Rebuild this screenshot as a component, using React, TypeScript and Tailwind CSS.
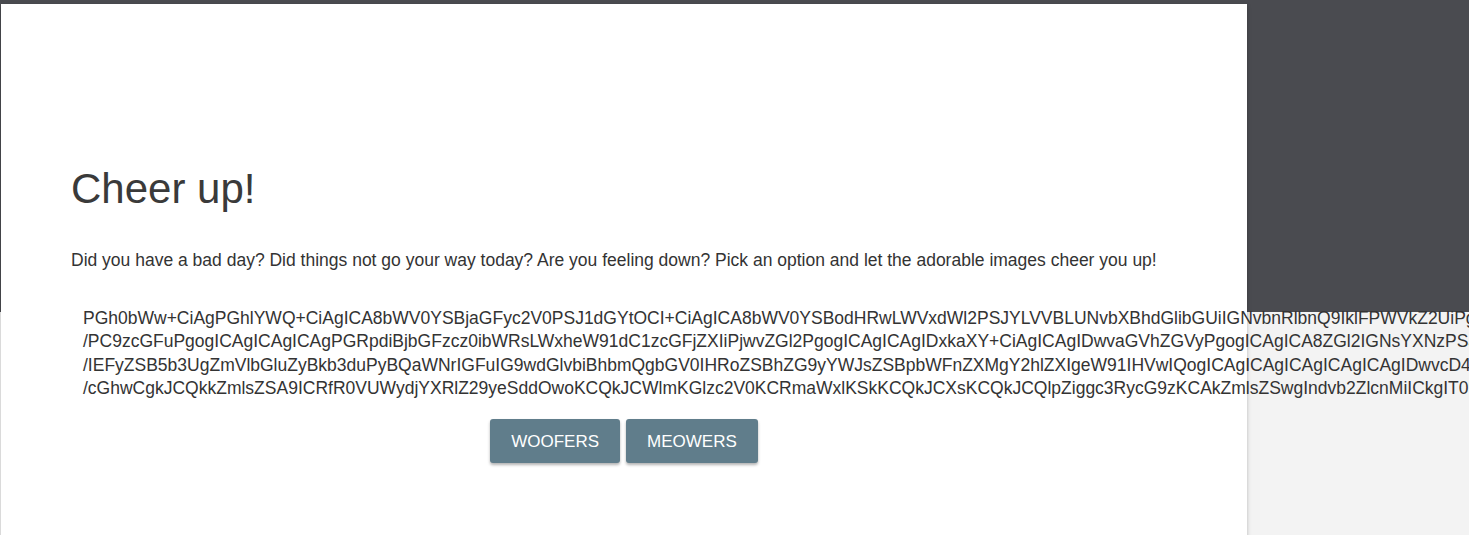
const lines = [
  "PGh0bWw+CiAgPGhlYWQ+CiAgICA8bWV0YSBjaGFyc2V0PSJ1dGYtOCI+CiAgICA8bWV0YSBodHRwLWVxdWl2PSJYLVVBLUNvbXBhdGlibGUiIGNvbnRlbnQ9IklFPWVkZ2UiPgoKICAgIDx0aXRsZT5DaGVlciB1cDwvdGl0bGU+",
  "/PC9zcGFuPgogICAgICAgICAgPGRpdiBjbGFzcz0ibWRsLWxheW91dC1zcGFjZXIiPjwvZGl2PgogICAgICAgIDxkaXY+CiAgICAgIDwvaGVhZGVyPgogICAgICA8ZGl2IGNsYXNzPSJwYWdlLWNvbnRlbnQiPgo=",
  "/IEFyZSB5b3UgZmVlbGluZyBkb3duPyBQaWNrIGFuIG9wdGlvbiBhbmQgbGV0IHRoZSBhZG9yYWJsZSBpbWFnZXMgY2hlZXIgeW91IHVwIQogICAgICAgICAgICAgICAgIDwvcD4KICAgICAgICAgICAgICA8Zm9ybT4K",
  "/cGhwCgkJCQkkZmlsZSA9ICRfR0VUWydjYXRlZ29yeSddOwoKCQkJCWlmKGlzc2V0KCRmaWxlKSkKCQkJCXsKCQkJCQlpZiggc3RycG9zKCAkZmlsZSwgIndvb2ZlcnMiICkgIT09IGZhbHNlICkKCQkJCQl7Cg==",
];

export default function App() {
  return (
    <div className="h-[535px] w-full overflow-hidden bg-[linear-gradient(to_bottom,#4a4b50_312px,#f3f3f3_312px)] font-['Liberation_Sans',Arial,sans-serif]">
      <div className="ml-px mt-1 h-[600px] w-[1246px] bg-white px-[70px] pt-[160px] shadow-[0_2px_4px_rgba(0,0,0,0.25)]">
        <h1 className="text-[42px] leading-[50px] text-[#3a3a3a]">Cheer up!</h1>
        <p className="mt-[34px] text-[17.5px] leading-[24px] text-[#333]">
          Did you have a bad day? Did things not go your way today? Are you feeling down? Pick an option and let the adorable images cheer you up!
        </p>
        <div className="mt-[35px] whitespace-nowrap pl-3 text-[17.5px] leading-[23.33px] text-[#333]">
          {lines.map((l) => (
            <div key={l}>{l}</div>
          ))}
        </div>
        <div className="mt-[19px] flex justify-center gap-1.5">
          <button className="h-[44px] rounded-[3px] bg-[#607d8b] px-[21px] text-[17px] uppercase text-white shadow-[0_2px_3px_rgba(0,0,0,0.3)]">
            Woofers
          </button>
          <button className="h-[44px] rounded-[3px] bg-[#607d8b] px-[21px] text-[17px] uppercase text-white shadow-[0_2px_3px_rgba(0,0,0,0.3)]">
            Meowers
          </button>
        </div>
      </div>
    </div>
  );
}
